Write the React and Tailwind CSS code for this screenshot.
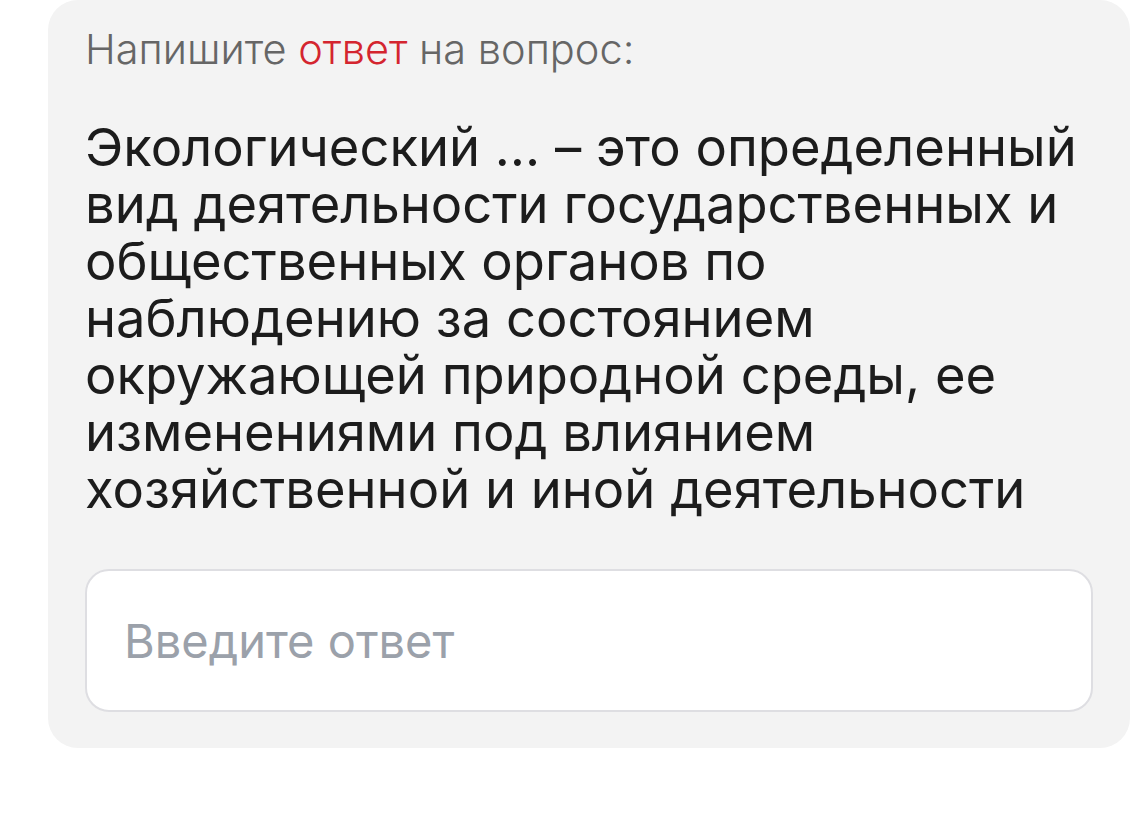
import { useState } from 'react'

export default function App() {
  const [answer, setAnswer] = useState('')

  return (
    <div className="min-h-screen bg-white pl-[48px] pr-[15px]">
      <div className="rounded-[30px] bg-[#f3f3f3] px-[37px] pt-[24px] pb-[36px]">
        <p className="font-['Inter',sans-serif] text-[41.5px] font-light leading-[50px] text-[#666666]">
          Напишите <span className="text-[#d4252f]">ответ</span> на вопрос:
        </p>

        <p className="mt-[45px] font-['Inter',sans-serif] text-[52.5px] leading-[57px] text-[#1c1c1c]">
          Экологический … – это определенный вид деятельности государственных и общественных органов по наблюдению за состоянием окружающей природной среды, ее изменениями под влиянием хозяйственной и иной деятельности
        </p>

        <input
          value={answer}
          onChange={e => setAnswer(e.target.value)}
          placeholder="Введите ответ"
          className="mt-[51px] block h-[143px] w-full rounded-[24px] border-2 border-[#dedee2] bg-white px-[37px]
                     font-['Inter',sans-serif] text-[47px] text-[#1c1c1c] placeholder:text-[#9ba1aa] focus:outline-none"
        />
      </div>
    </div>
  )
}
